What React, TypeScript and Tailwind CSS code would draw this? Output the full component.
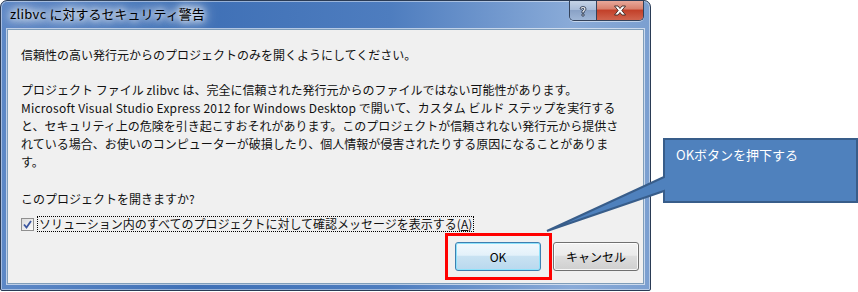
import React from "react";

const font = "font-['Noto_Sans_CJK_JP','Noto_Sans',sans-serif]";

function CaptionButtons() {
  return (
    <div className="flex h-[20px] rounded-b-[5px] border border-t-0 border-[#34425a] overflow-hidden shadow-[0_1px_0_rgba(255,255,255,0.5)]">
      <div className="w-[27px] h-full flex items-center justify-center bg-[linear-gradient(to_bottom,#c5d3e6_0%,#a9bdd9_45%,#8aa2c6_50%,#9fb6d6_100%)] border-r border-[#34425a]">
        <svg width="10" height="12" viewBox="0 0 10 12">
          <path
            d="M2 4 Q2 1.5 5 1.5 Q8 1.5 8 4 Q8 5.5 6 6.5 L6 8 L4 8 L4 5.8 Q6 5 6 4 Q6 3.3 5 3.3 Q4 3.3 4 4.2 Z M4 9 H6 V11 H4 Z"
            fill="#fff"
            stroke="#2c3a52"
            strokeWidth="0.9"
          />
        </svg>
      </div>
      <div className="w-[46px] h-full flex items-center justify-center bg-[linear-gradient(to_bottom,#e8a89a_0%,#d9826f_40%,#c3412a_50%,#d0644e_100%)]">
        <svg width="14" height="11" viewBox="0 0 14 11">
          <path
            d="M1.5 1 H5 L7 3.5 L9 1 H12.5 L8.8 5.5 L12.5 10 H9 L7 7.5 L5 10 H1.5 L5.2 5.5 Z"
            fill="#fff"
            stroke="#3b2622"
            strokeWidth="0.9"
          />
        </svg>
      </div>
    </div>
  );
}

export default function App() {
  return (
    <div className={`relative w-[858px] h-[292px] bg-white overflow-hidden ${font}`}>
      {/* Dialog window */}
      <div className="w-[651px] h-[291px] flex flex-col rounded-t-[7px] rounded-b-[2px] border border-[#2a3b55] bg-[linear-gradient(to_right,#5d88c6_0%,#3f70b6_30%,#4e7dbf_60%,#8aabd8_88%,#7b9fd0_100%)] shadow-[inset_0_0_0_1px_rgba(255,255,255,0.45)]">
        {/* Title bar */}
        <div className="h-[28px] flex items-start justify-between pl-[8px] pr-[6px]">
          <span className="mt-[4px] text-[13px] leading-[18px] text-black px-[1px] [text-shadow:0_0_6px_#fff,0_0_10px_#fff,0_0_14px_#fff,0_0_18px_#fff]">
            <span className="tracking-[0.3px]">zlibvc</span> に対するセキュリティ警告
          </span>
          <CaptionButtons />
        </div>

        {/* Client area */}
        <div className="flex-1 ml-[6px] mr-[6px] mb-[6px] border border-[#7f9db9] bg-[#f0f0f0] shadow-[0_0_0_1px_rgba(255,255,255,0.6)] flex flex-col text-[12px] leading-[18px] text-[#111] pl-[13px] pr-[6px]">
          <p className="mt-[16px] whitespace-nowrap">
            信頼性の高い発行元からのプロジェクトのみを開くようにしてください。
          </p>
          <p className="mt-[17px] whitespace-nowrap">
            プロジェクト ファイル <span className="tracking-[0.2px]">zlibvc</span> は、完全に信頼された発行元からのファイルではない可能性があります。
            <br />
            <span className="tracking-[0.22px]">Microsoft Visual Studio Express 2012 for Windows Desktop</span> で開いて、カスタム ビルド ステップを実行する
            <br />
            と、セキュリティ上の危険を引き起こすおそれがあります。このプロジェクトが信頼されない発行元から提供さ
            <br />
            れている場合、お使いのコンピューターが破損したり、個人情報が侵害されたりする原因になることがありま
            <br />
            す。
          </p>
          <p className="mt-[19px] whitespace-nowrap">このプロジェクトを開きますか?</p>

          <label className="mt-[8px] flex items-center gap-[3px] whitespace-nowrap">
            <span className="w-[13px] h-[13px] border border-[#8f8f8f] bg-[linear-gradient(135deg,#dcdcdc,#fbfbfb)] flex items-center justify-center">
              <svg width="9" height="9" viewBox="0 0 9 9">
                <path d="M1 4.5 L3.5 7.5 L8 1" fill="none" stroke="#3b56a0" strokeWidth="1.8" />
              </svg>
            </span>
            <span className="border border-dotted border-black px-[1px] leading-[14px]">
              ソリューション内のすべてのプロジェクトに対して確認メッセージを表示する(<span className="underline">A</span>)
            </span>
          </label>

          {/* Buttons */}
          <div className="mt-[10px] flex justify-end gap-[12px] mr-[-2px]">
            <button className="w-[86px] h-[29px] rounded-[3px] border border-[#3c7fb1] bg-[linear-gradient(to_bottom,#f2f9fd_0%,#e3f1fa_45%,#c8e2f2_50%,#b9d8ee_100%)] shadow-[inset_0_0_0_1px_#8ee2fb] text-[12px] text-black">
              OK
            </button>
            <button className="w-[86px] h-[29px] rounded-[3px] border border-[#707070] bg-[linear-gradient(to_bottom,#f2f2f2_0%,#ebebeb_45%,#dddddd_50%,#cfcfcf_100%)] shadow-[inset_0_0_0_1px_rgba(255,255,255,0.8)] text-[12px] text-black">
              キャンセル
            </button>
          </div>
        </div>
      </div>

      {/* Annotation: red highlight around OK */}
      <div className="absolute left-[445px] top-[233px] w-[107px] h-[47px] border-[3px] border-[#ff0000]" />

      {/* Annotation: callout */}
      <svg className="absolute left-0 top-0 pointer-events-none" width="858" height="292">
        <path
          d="M664 139 H857 V202 H664 V191 L547 231 L664 177 Z"
          fill="#4f81bd"
          stroke="#385d8a"
          strokeWidth="2"
          strokeLinejoin="miter"
        />
      </svg>
      <div className="absolute left-[676px] top-[146px] text-[13px] leading-[18px] text-white whitespace-nowrap">
        OKボタンを押下する
      </div>
    </div>
  );
}
